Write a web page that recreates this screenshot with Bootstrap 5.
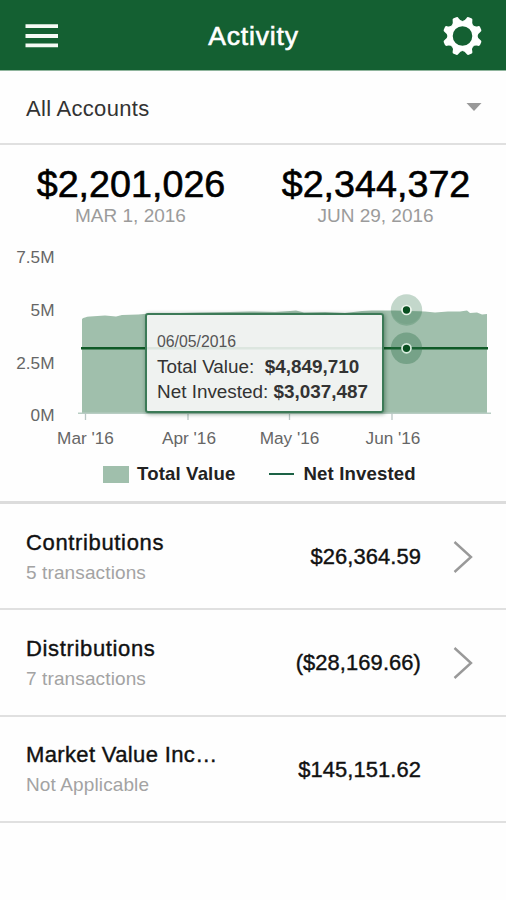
<!DOCTYPE html>
<html lang="en">
<head>
<meta charset="utf-8">
<meta name="viewport" content="width=device-width, initial-scale=1">
<title>Activity</title>
<link href="https://cdn.jsdelivr.net/npm/bootstrap@5.3.0/dist/css/bootstrap.min.css" rel="stylesheet">
<style>
  body { font-family: "Liberation Sans", Arial, sans-serif; color: #111; background: #fefefe; line-height: 1; overflow-x: hidden; }
  .app-bar { height: 71px; background: #146032; padding: 1px 24px 0 25px; border-bottom: 1px solid #8fb59d; }
  .app-title { font-size: 26.5px; letter-spacing: .85px; -webkit-text-stroke: .6px #fff; margin-top: 2px; }
  .side-slot { width: 40px; }
  .account-picker { height: 74px; padding: 3px 24px 0 26px; border-bottom: 2px solid #e0e0e0; font-size: 22px; letter-spacing: .3px; color: #333; }
  .summary { height: 359px; border-bottom: 3px solid #dcdcdc; }
  .totals { padding: 20px 8px 0; }
  .total-amount { font-size: 37.7px; line-height: 40px; color: #000; -webkit-text-stroke: .6px #000; position: relative; top: -1px; left: .5px; }
  .total-date { font-size: 19px; line-height: 22px; color: #9b9b9b; }
  .chart { margin-top: 15px; height: 214px; }
  .chart text { font-size: 17.2px; fill: #666; }
  .tip { left: 145px; top: 71px; width: 239px; height: 100px; padding: 19px 0 0 10px; border: 2px solid #3c7a57; border-radius: 3px; background: rgba(249, 249, 249, .88); box-shadow: 1px 1px 4px rgba(0, 50, 20, .45); font-size: 18.9px; color: #333; white-space: nowrap; }
  .tip-date { font-size: 15.8px; line-height: 16px; margin-bottom: 4px; color: #555; }
  .tip-line { line-height: 25px; }
  .legend-row { height: 24px; margin-top: 6px; padding-left: 103px; font-size: 18.6px; letter-spacing: .15px; font-weight: bold; color: #222; }
  .swatch { width: 26px; height: 17px; background: #a0bfac; margin-right: 8px; }
  .dash { width: 25px; height: 2px; background: #1c6245; margin: 0 9px 0 34px; }
  .activity-row { height: 106.4px; padding: 0 32px 0 26px; border-bottom: 2px solid #e0e0e0; }
  .row-text { padding-top: 2px; }
  .row-title { font-size: 22px; line-height: 26px; letter-spacing: .65px; -webkit-text-stroke: .4px #111; margin-bottom: 5px; }
  .row-title-tight { letter-spacing: .36px; }
  .row-note { font-size: 19px; line-height: 24px; letter-spacing: .12px; color: #a3a3a3; }
  .row-amount { font-size: 21.9px; letter-spacing: .1px; -webkit-text-stroke: .4px #111; margin-top: 1px; }
  .arrow { width: 22px; margin: 1px 0 0 31px; }
</style>
</head>
<body>
<header class="app-bar d-flex align-items-center justify-content-between text-white">
  <div class="side-slot d-flex">
    <svg width="34" height="26" viewBox="0 0 34 26" aria-label="Menu"><path d="M.5 3.2h32.5M.5 13h32.5M.5 22.4h32.5" stroke="#f6fbf6" stroke-width="3.8"/></svg>
  </div>
  <h1 class="app-title mb-0 fw-normal">Activity</h1>
  <div class="side-slot d-flex justify-content-end">
    <svg width="40" height="40" viewBox="-20.5 -20 40 40" fill="#fff" aria-label="Settings">
      <defs><path id="tooth" d="M-6.200-13.500Q-3.600-15-3.200-18Q-3-19.700-1.400-19.700H1.400Q3-19.700 3.200-18Q3.600-15 6.200-13.500Z"/></defs>
      <circle r="12.300" fill="none" stroke="#fff" stroke-width="5"/>
      <use href="#tooth" transform="rotate(22.5)"/><use href="#tooth" transform="rotate(67.5)"/>
      <use href="#tooth" transform="rotate(112.5)"/><use href="#tooth" transform="rotate(157.5)"/>
      <use href="#tooth" transform="rotate(202.5)"/><use href="#tooth" transform="rotate(247.5)"/>
      <use href="#tooth" transform="rotate(292.5)"/><use href="#tooth" transform="rotate(337.5)"/>
    </svg>
  </div>
</header>

<div class="account-picker d-flex align-items-center justify-content-between">
  <span>All Accounts</span>
  <svg width="16" height="16" viewBox="0 0 16 16"><path d="M.5 2h15L8 10z" fill="#999"/></svg>
</div>

<section class="summary">
  <div class="totals d-flex text-center">
    <div class="col-6">
      <div class="total-amount">$2,201,026</div>
      <div class="total-date">MAR 1, 2016</div>
    </div>
    <div class="col-6">
      <div class="total-amount">$2,344,372</div>
      <div class="total-date">JUN 29, 2016</div>
    </div>
  </div>

  <div class="chart position-relative">
    <svg class="d-block" width="506" height="214" viewBox="0 242 506 214">
      <path d="M82 413V319Q84 317 90 316.500L105 315.500L116 316.500L122 315L138 314.500L150 313.500L180 313L200 312.500L230 312L250 311.500L275 312L290 311L296 310.500L304 312.500L325 312L345 313L362 311L372 310.500L395 310.500L425 311.500L435 312.500L448 311.500L460 311.500L467 310.500L470 313L477 312.500L482 314.500L487 314V413Z" fill="#a0bfac"/>
      <path d="M78 413.200H491" stroke="#b8cdc3" stroke-width="1.500"/>
      <path d="M85.500 413v7M188 413v7M289.500 413v7M392 413v7" stroke="#b9c6c4" stroke-width="1.300"/>
      <path d="M81 348.300H488" stroke="#0f5a27" stroke-width="2.500"/>
      <circle cx="406.500" cy="310" r="15.700" fill="#3b7f56" fill-opacity=".3"/>
      <circle cx="406.500" cy="310" r="15.700" fill="none"/>
      <path d="M391 310.700H422A15.700 15.700 0 0 1 391 310.700Z" fill="#2d6f48" fill-opacity=".1"/>
      <circle cx="406.500" cy="348.300" r="15.700" fill="#2d6f48" fill-opacity=".36"/>
      <circle cx="406.500" cy="310" r="4.500" fill="#084f20" stroke="#eef7ee" stroke-width="1.700"/>
      <circle cx="406.500" cy="348.300" r="4.500" fill="#084f20" stroke="#d9eddf" stroke-width="1.700"/>
      <g text-anchor="end">
        <text x="54.500" y="263">7.5M</text><text x="54.500" y="316">5M</text>
        <text x="54.500" y="368.800">2.5M</text><text x="54.500" y="421">0M</text>
      </g>
      <g text-anchor="middle">
        <text x="85.500" y="444">Mar '16</text><text x="189" y="444">Apr '16</text>
        <text x="289.500" y="444">May '16</text><text x="393" y="444">Jun '16</text>
      </g>
    </svg>
    <div class="tip position-absolute">
      <div class="tip-date">06/05/2016</div>
      <div class="tip-line">Total Value:&nbsp; <b>$4,849,710</b></div>
      <div class="tip-line">Net Invested: <b>$3,037,487</b></div>
    </div>
  </div>

  <div class="legend-row d-flex align-items-center">
    <span class="swatch"></span><span>Total Value</span>
    <span class="dash"></span><span>Net Invested</span>
  </div>
</section>

<main>
  <div class="activity-row d-flex align-items-center">
    <div class="row-text flex-grow-1">
      <div class="row-title">Contributions</div>
      <div class="row-note">5 transactions</div>
    </div>
    <div class="row-amount">$26,364.59</div>
    <div class="arrow"><svg width="22" height="34" viewBox="0 0 22 34"><path d="M2.500 2L19 17L2.500 32" fill="none" stroke="#999" stroke-width="2.400"/></svg></div>
  </div>
  <div class="activity-row d-flex align-items-center">
    <div class="row-text flex-grow-1">
      <div class="row-title">Distributions</div>
      <div class="row-note">7 transactions</div>
    </div>
    <div class="row-amount">($28,169.66)</div>
    <div class="arrow"><svg width="22" height="34" viewBox="0 0 22 34"><path d="M2.500 2L19 17L2.500 32" fill="none" stroke="#999" stroke-width="2.400"/></svg></div>
  </div>
  <div class="activity-row d-flex align-items-center">
    <div class="row-text flex-grow-1">
      <div class="row-title row-title-tight">Market Value Inc…</div>
      <div class="row-note">Not Applicable</div>
    </div>
    <div class="row-amount">$145,151.62</div>
    <div class="arrow"></div>
  </div>
</main>
<script src="https://cdn.jsdelivr.net/npm/bootstrap@5.3.0/dist/js/bootstrap.bundle.min.js"></script>
</body>
</html>
